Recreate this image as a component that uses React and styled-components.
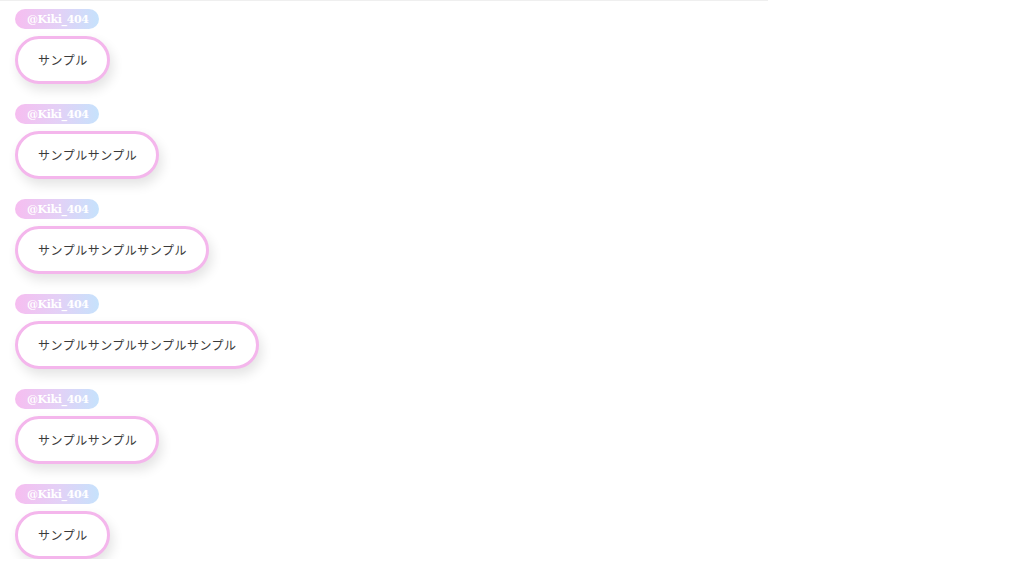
import React from 'react';
import styled, { createGlobalStyle } from 'styled-components';

const GlobalStyle = createGlobalStyle`
  html, body {
    margin: 0;
    padding: 0;
    background: #ffffff;
  }
`;

const TopLine = styled.div`
  width: 768px;
  height: 1px;
  background: #efefef;
`;

const List = styled.div`
  display: flex;
  flex-direction: column;
  align-items: flex-start;
  gap: 20px;
  padding: 8px 0 0 15px;
`;

const Item = styled.div`
  display: flex;
  flex-direction: column;
  align-items: flex-start;
  gap: 7px;
`;

const Name = styled.div`
  height: 20px;
  box-sizing: border-box;
  padding: 0 11px 0 12px;
  border-radius: 10px;
  background: linear-gradient(90deg, #f6bdf0 0%, #e4d0f6 50%, #c6e2fc 100%);
  color: #ffffff;
  font-family: "DejaVu Serif", serif;
  font-weight: bold;
  font-size: 11px;
  letter-spacing: -0.4px;
  line-height: 21px;
  white-space: nowrap;
`;

const Bubble = styled.div`
  box-sizing: border-box;
  height: 48px;
  padding: 0 19px 0 20px;
  border: 3px solid #f4b6ec;
  border-radius: 24px;
  background: #ffffff;
  box-shadow: 3px 6px 12px rgba(0, 0, 0, 0.11);
  color: #3a3a3a;
  font-family: "Noto Sans CJK JP", "Noto Sans", sans-serif;
  font-size: 12px;
  letter-spacing: 0.5px;
  line-height: 42px;
  white-space: nowrap;
`;

const messages = [1, 2, 3, 4, 2, 1];

const App = () => {
  return (
    <>
      <GlobalStyle />
      <TopLine />
      <List>
        {messages.map((count, index) => (
          <Item key={index}>
            <Name>@Kiki_404</Name>
            <Bubble>{'サンプル'.repeat(count)}</Bubble>
          </Item>
        ))}
      </List>
    </>
  );
};

export default App;
